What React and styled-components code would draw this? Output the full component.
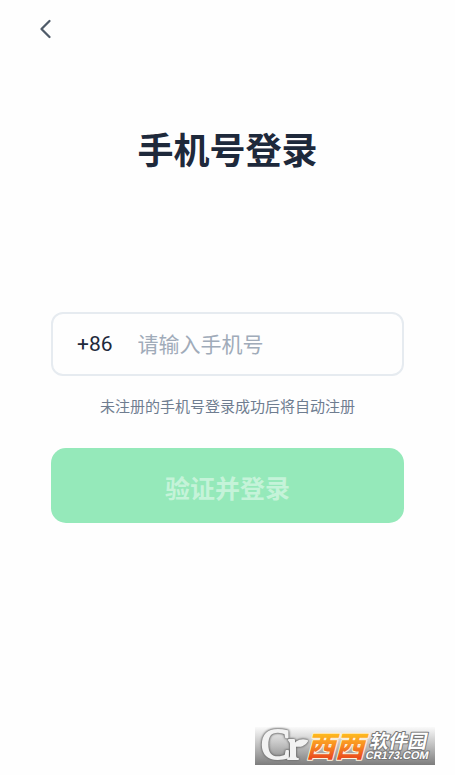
import React from "react";
import styled, { createGlobalStyle } from "styled-components";

const GlobalStyle = createGlobalStyle`
  *, *::before, *::after { box-sizing: border-box; }
  body {
    margin: 0;
    background: #fefefe;
    color: #1e293b;
    font-family: Roboto, "Noto Sans CJK SC", sans-serif;
  }
`;

const Page = styled.div`
  display: flex;
  flex-direction: column;
  min-height: 100vh;
`;

const Header = styled.header`
  display: flex;
  align-items: center;
  height: 58px;
  padding: 0 34px;
`;

const BackButton = styled.button`
  display: flex;
  padding: 0;
  border: 0;
  background: none;
  color: #4f5b69;
  cursor: pointer;
`;

const Main = styled.main`
  display: flex;
  flex-direction: column;
  padding: 66px 51px 40px;
`;

const Title = styled.h1`
  margin: 0;
  font-size: 36px;
  line-height: 56px;
  font-weight: 700;
  text-align: center;
`;

const Form = styled.form`
  display: flex;
  flex-direction: column;
  margin-top: 132px;
`;

const PhoneField = styled.div`
  display: flex;
  align-items: center;
  gap: 25px;
  height: 64px;
  padding: 0 24px;
  border: 2px solid #e6ebf0;
  border-radius: 12px;
`;

const DialCode = styled.label`
  font-size: 21px;
  line-height: 32px;
`;

const PhoneInput = styled.input`
  flex: 1;
  min-width: 0;
  height: 34px;
  padding: 2px 0 0;
  border: 0;
  outline: 0;
  background: none;
  color: inherit;
  font: inherit;
  font-size: 21px;

  &::placeholder {
    color: #a0abb9;
    opacity: 1;
  }
`;

const Hint = styled.p`
  margin: 19px 0 29px;
  color: #6f7d90;
  font-size: 15px;
  line-height: 24px;
  text-align: center;
`;

const SubmitButton = styled.button`
  height: 75px;
  padding: 2px 0 0;
  border: 0;
  border-radius: 15px;
  background: #95e9ba;
  color: #c5f3d9;
  font: inherit;
  font-size: 25px;
  font-weight: 700;
`;

const Watermark = styled.footer`
  display: flex;
  align-self: flex-end;
  margin: auto 20px 10px;
  background: linear-gradient(#fafafa, #bdbdbd 50%, #7d7d7d);
`;

const LogoDrawing = styled.svg`
  overflow: visible;
`;

const Sprout = styled.g`
  fill: #f2f2f2;
  stroke: #f2f2f2;
  stroke-width: 2;
  stroke-linejoin: round;
  filter: drop-shadow(0 0 1px #555) drop-shadow(0 0 1px #888);
`;

const LogoText = styled.text`
  font-family: ${(p) => p.$family}, sans-serif;
  font-size: ${(p) => p.$size}px;
  font-weight: ${(p) => p.$weight || 900};
  fill: ${(p) => p.$fill || "#fff"};
  stroke: ${(p) => p.$stroke || "#777"};
  stroke-width: 2;
  stroke-linejoin: round;
  paint-order: stroke;
`;

function BackIcon() {
  return (
    <svg width="24" height="24" viewBox="0 0 24 24" fill="none" aria-hidden="true">
      <path
        d="M15.5 4 7.5 12l8 8"
        stroke="currentColor"
        strokeWidth="2.3"
        strokeLinecap="round"
        strokeLinejoin="round"
      />
    </svg>
  );
}

function SiteLogo() {
  return (
    <LogoDrawing width="180" height="38" viewBox="0 0 180 38" role="img" aria-label="西西软件园 CR173.COM">
      <defs>
        <linearGradient id="orange" x1="0" y1="0" x2="0" y2="1">
          <stop offset="0.2" stopColor="#ffc21c" />
          <stop offset="0.5" stopColor="#f99222" />
          <stop offset="0.85" stopColor="#e9491c" />
        </linearGradient>
      </defs>
      <Sprout>
        <text x="6" y="32" fontFamily="Liberation Serif, serif" fontSize="44">
          C
        </text>
        <path d="M34 13h5v5c3-4 8-6 13-4-2 4-7 6-12 4v10c0 2 1 4 3 4H33c2 0 3-2 3-4V17c0-2-1-3-2-4z" />
      </Sprout>
      <LogoText
        transform="translate(51 30) skewX(-15)"
        $family="Noto Sans CJK SC"
        $size={29}
        $fill="url(#orange)"
        $stroke="#fff3dc"
      >
        西西
      </LogoText>
      <LogoText transform="translate(114 21) skewX(-12)" $family="Noto Sans CJK SC" $size={19} $weight={700}>
        软件园
      </LogoText>
      <LogoText transform="translate(110 32) skewX(-12)" $family="Liberation Sans" $size={11} $weight={700}>
        CR173.COM
      </LogoText>
    </LogoDrawing>
  );
}

export default function App() {
  return (
    <>
      <GlobalStyle />
      <Page>
        <Header>
          <BackButton type="button" aria-label="返回">
            <BackIcon />
          </BackButton>
        </Header>
        <Main>
          <Title>手机号登录</Title>
          <Form onSubmit={(event) => event.preventDefault()}>
            <PhoneField>
              <DialCode htmlFor="phone">+86</DialCode>
              <PhoneInput id="phone" type="tel" placeholder="请输入手机号" />
            </PhoneField>
            <Hint>未注册的手机号登录成功后将自动注册</Hint>
            <SubmitButton type="submit" disabled>
              验证并登录
            </SubmitButton>
          </Form>
        </Main>
        <Watermark>
          <SiteLogo />
        </Watermark>
      </Page>
    </>
  );
}
